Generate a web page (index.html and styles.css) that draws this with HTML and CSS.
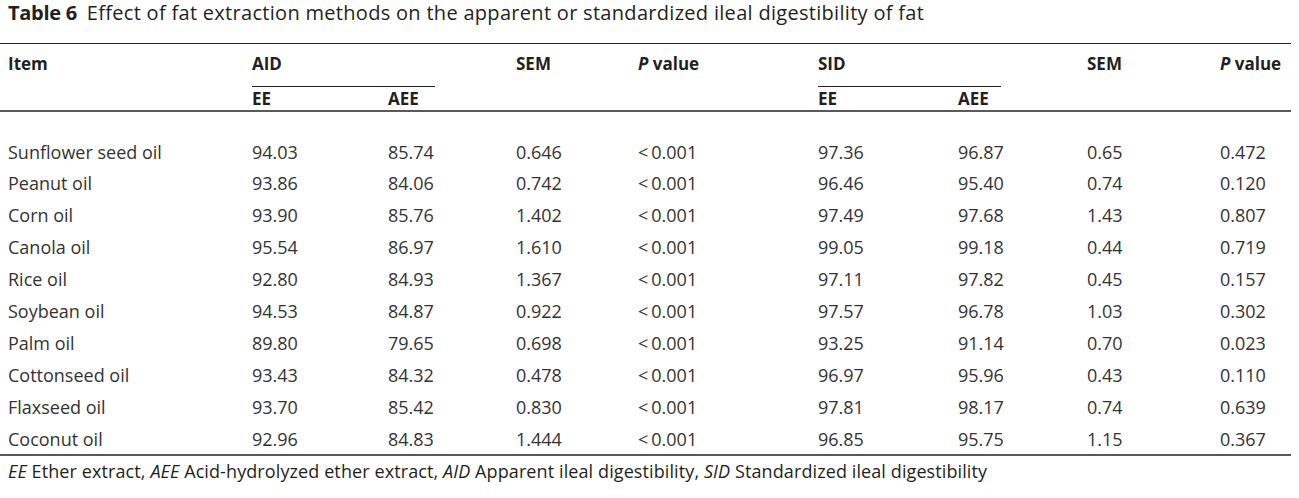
FILE: index.html
```html
<!DOCTYPE html>
<html>
<head>
<meta charset="utf-8">
<link rel="stylesheet" href="styles.css">
</head>
<body>
<div class="page">
  <div class="caption"><span class="label">Table 6</span>Effect of fat extraction methods on the apparent or standardized ileal digestibility of fat</div>
  <table class="tbl">
    <colgroup>
      <col class="c-item"><col class="c-ee"><col class="c-aee"><col class="c-sem"><col class="c-p"><col class="c-ee2"><col class="c-aee2"><col class="c-sem2"><col class="c-p2">
    </colgroup>
    <thead>
      <tr class="h1">
        <th>Item</th>
        <th colspan="2"><div class="grp">AID</div></th>
        <th>SEM</th>
        <th><i>P</i> value</th>
        <th colspan="2"><div class="grp">SID</div></th>
        <th>SEM</th>
        <th><i>P</i> value</th>
      </tr>
      <tr class="h2">
        <th></th><th>EE</th><th>AEE</th><th></th><th></th><th>EE</th><th>AEE</th><th></th><th></th>
      </tr>
    </thead>
    <tbody>
      <tr><td>Sunflower seed oil</td><td>94.03</td><td>85.74</td><td>0.646</td><td>&lt;&#8201;0.001</td><td>97.36</td><td>96.87</td><td>0.65</td><td>0.472</td></tr>
      <tr><td>Peanut oil</td><td>93.86</td><td>84.06</td><td>0.742</td><td>&lt;&#8201;0.001</td><td>96.46</td><td>95.40</td><td>0.74</td><td>0.120</td></tr>
      <tr><td>Corn oil</td><td>93.90</td><td>85.76</td><td>1.402</td><td>&lt;&#8201;0.001</td><td>97.49</td><td>97.68</td><td>1.43</td><td>0.807</td></tr>
      <tr><td>Canola oil</td><td>95.54</td><td>86.97</td><td>1.610</td><td>&lt;&#8201;0.001</td><td>99.05</td><td>99.18</td><td>0.44</td><td>0.719</td></tr>
      <tr><td>Rice oil</td><td>92.80</td><td>84.93</td><td>1.367</td><td>&lt;&#8201;0.001</td><td>97.11</td><td>97.82</td><td>0.45</td><td>0.157</td></tr>
      <tr><td>Soybean oil</td><td>94.53</td><td>84.87</td><td>0.922</td><td>&lt;&#8201;0.001</td><td>97.57</td><td>96.78</td><td>1.03</td><td>0.302</td></tr>
      <tr><td>Palm oil</td><td>89.80</td><td>79.65</td><td>0.698</td><td>&lt;&#8201;0.001</td><td>93.25</td><td>91.14</td><td>0.70</td><td>0.023</td></tr>
      <tr><td>Cottonseed oil</td><td>93.43</td><td>84.32</td><td>0.478</td><td>&lt;&#8201;0.001</td><td>96.97</td><td>95.96</td><td>0.43</td><td>0.110</td></tr>
      <tr><td>Flaxseed oil</td><td>93.70</td><td>85.42</td><td>0.830</td><td>&lt;&#8201;0.001</td><td>97.81</td><td>98.17</td><td>0.74</td><td>0.639</td></tr>
      <tr><td>Coconut oil</td><td>92.96</td><td>84.83</td><td>1.444</td><td>&lt;&#8201;0.001</td><td>96.85</td><td>95.75</td><td>1.15</td><td>0.367</td></tr>
    </tbody>
  </table>
  <div class="foot"><i>EE</i> Ether extract, <i>AEE</i> Acid-hydrolyzed ether extract, <i>AID</i> Apparent ileal digestibility, <i>SID</i> Standardized ileal digestibility</div>
</div>
</body>
</html>
```

FILE: styles.css
```css
html, body {
  margin: 0;
  padding: 0;
  background: #ffffff;
}
.page {
  width: 1291px;
  font-family: "Open Sans", "Liberation Sans", sans-serif;
  color: #231f20;
}
.caption {
  padding: 0 0 0 8px;
  height: 43px;
  box-sizing: border-box;
  font-size: 20px;
  line-height: 25px;
  letter-spacing: 0.3px;
  white-space: nowrap;
}
.caption .label {
  font-weight: 700;
  margin-right: 10px;
  letter-spacing: -0.3px;
}
.tbl {
  width: 1291px;
  border-collapse: collapse;
  table-layout: fixed;
  font-size: 18px;
}
.tbl thead {
  border-top: 1px solid #231f20;
  border-bottom: 2px solid #5a5a5c;
}
.c-item { width: 244px; }
.c-ee { width: 136px; }
.c-aee { width: 128px; }
.c-sem { width: 122px; }
.c-p { width: 180px; }
.c-ee2 { width: 140px; }
.c-aee2 { width: 129px; }
.c-sem2 { width: 133px; }
.c-p2 { width: 79px; }
.tbl th {
  text-align: left;
  font-weight: 700;
  font-size: 17px;
  line-height: 22px;
  padding: 0 0 0 8px;
  vertical-align: top;
  white-space: nowrap;
}
.tbl thead .h1 th {
  padding-top: 9px;
  height: 41px;
  box-sizing: border-box;
}
.tbl .grp {
  width: 183px;
  border-bottom: 1px solid #231f20;
  padding-bottom: 11px;
}
.tbl thead .h2 th {
  height: 24px;
  box-sizing: border-box;
  padding-top: 1px;
}
.tbl td {
  padding: 0 0 0 8px;
  height: 32px;
  line-height: 24px;
  color: #333333;
  white-space: nowrap;
  box-sizing: border-box;
}
.tbl tbody tr:first-child td {
  padding-top: 24px;
  height: 56px;
}
.tbl tbody tr:last-child td {
  height: 31px;
}
.foot {
  border-top: 2px solid #5a5a5c;
  padding: 3px 0 0 8px;
  font-size: 18px;
  line-height: 24px;
  letter-spacing: 0.1px;
  white-space: nowrap;
}
```
